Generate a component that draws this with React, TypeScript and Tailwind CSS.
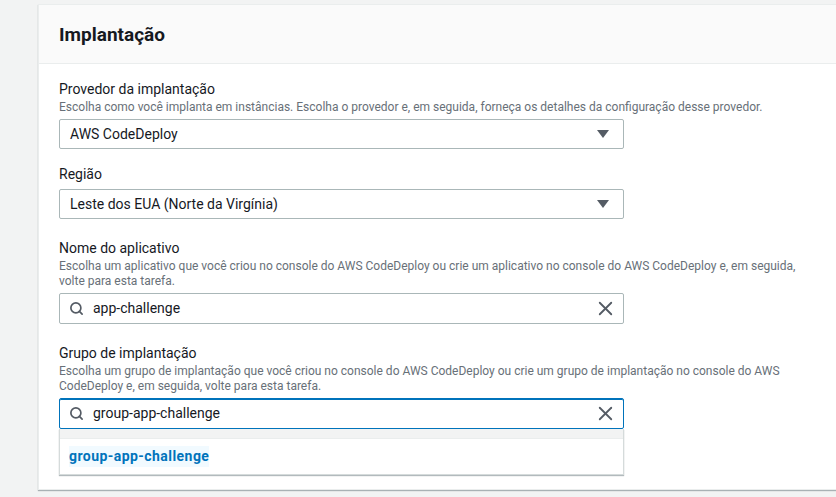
import { Search, X } from "lucide-react";

const font = { fontFamily: "Roboto, 'Noto Sans', Arial, sans-serif" };

const Caret = () => (
  <svg width="12" height="10" viewBox="0 0 12 10" className="shrink-0">
    <path d="M0 1h12L6 9z" fill="#545b64" />
  </svg>
);

const Field = ({
  label,
  desc,
  className = "",
  children,
}: {
  label: string;
  desc?: string;
  className?: string;
  children: React.ReactNode;
}) => (
  <div className={"flex flex-col " + className}>
    <div className="text-[14px] leading-[22px] text-[#16191f]">{label}</div>
    {desc && <div className="text-[12px] leading-[15px] text-[#687078] w-[740px]">{desc}</div>}
    <div className="mt-[4px]">{children}</div>
  </div>
);

const SelectBox = ({ value }: { value: string }) => (
  <div className="w-[565px] h-[30px] border border-[#aab7b8] rounded-[2px] bg-white flex items-center justify-between pl-[10px] pr-[14px]">
    <span className="text-[14px] text-[#16191f]">{value}</span>
    <Caret />
  </div>
);

const SearchBox = ({ value, focused }: { value: string; focused?: boolean }) => (
  <div
    className={
      "w-[565px] h-[31px] rounded-[2px] bg-white flex items-center pl-[9px] pr-[6px] " +
      (focused ? "border border-[#0073bb] shadow-[inset_0_1px_0_#0073bb]" : "border border-[#aab7b8]")
    }
  >
    <Search className="w-[15px] h-[15px] text-[#545b64]" strokeWidth={2.7} />
    <span className="ml-[9px] text-[14px] text-[#16191f] flex-1">{value}</span>
    <X className="w-[23px] h-[23px] text-[#545b64]" strokeWidth={1.9} />
  </div>
);

export default function App() {
  return (
    <div style={font} className="w-[836px] h-[497px] overflow-hidden bg-[#f2f3f3] pt-[4px] pl-[38px]">
      <div className="w-[820px] h-[486px] bg-white border border-[#eaeded] shadow-[0_1px_1px_rgba(0,28,36,0.3)] flex flex-col">
        <div className="h-[59px] bg-[#fafafa] border-b border-[#eaeded] flex items-center pl-[20px]">
          <h2 className="text-[19px] font-bold text-[#16191f] leading-none">Implantação</h2>
        </div>
        <div className="flex flex-col pl-[20px] pt-[14px]">
          <Field
            label="Provedor da implantação"
            desc="Escolha como você implanta em instâncias. Escolha o provedor e, em seguida, forneça os detalhes da configuração desse provedor."
          >
            <SelectBox value="AWS CodeDeploy" />
          </Field>
          <Field label="Região" className="mt-[14px]">
            <SelectBox value="Leste dos EUA (Norte da Virgínia)" />
          </Field>
          <Field
            label="Nome do aplicativo"
            className="mt-[18px]"
            desc="Escolha um aplicativo que você criou no console do AWS CodeDeploy ou crie um aplicativo no console do AWS CodeDeploy e, em seguida, volte para esta tarefa."
          >
            <SearchBox value="app-challenge" />
          </Field>
          <Field
            label="Grupo de implantação"
            className="mt-[18px]"
            desc="Escolha um grupo de implantação que você criou no console do AWS CodeDeploy ou crie um grupo de implantação no console do AWS CodeDeploy e, em seguida, volte para esta tarefa."
          >
            <div className="relative">
              <SearchBox value="group-app-challenge" focused />
              <div className="absolute left-0 top-[31px] w-[565px] bg-white border border-[#d5dbdb] border-t-0 shadow-[0_1px_1px_rgba(0,28,36,0.3)]">
                <div className="h-[10px] bg-[#f2f3f3] border-b border-[#eaeded]" />
                <div className="h-[35px] flex items-center pl-[9px]">
                  <span className="text-[14px] font-bold tracking-[0.45px] text-[#0073bb] bg-[#f1faff]">
                    group-app-challenge
                  </span>
                </div>
              </div>
            </div>
          </Field>
        </div>
      </div>
    </div>
  );
}
